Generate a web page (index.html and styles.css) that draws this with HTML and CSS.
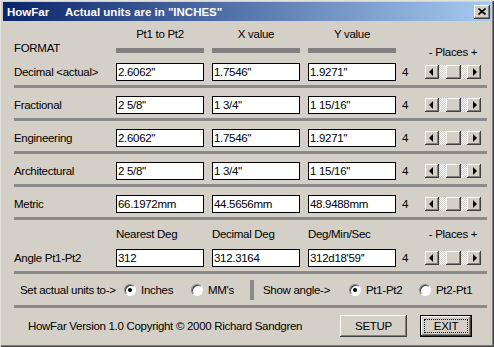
FILE: index.html
```html
<!DOCTYPE html>
<html>
<head>
    <meta charset="UTF-8">
    <title>HowFar</title>
    <link rel="stylesheet" href="styles.css">
</head>
<body>
<div class="window">
    <div class="titlebar">
        <span class="app">HowFar</span>
        <span class="caption">Actual units are in "INCHES"</span>
        <span class="close">
            <svg width="8" height="7" viewBox="0 0 8 7"><path d="M0.5 0.5 L7.5 6.5 M7.5 0.5 L0.5 6.5" stroke="#000" stroke-width="1.6" fill="none"/></svg>
        </span>
    </div>
    <div class="panel">
        <div class="grid head">
            <div class="col-title c2">Pt1 to Pt2</div>
            <div class="col-title c3">X value</div>
            <div class="col-title c4">Y value</div>
            <div class="format">FORMAT</div>
            <div class="bar c2"></div>
            <div class="bar c3"></div>
            <div class="bar c4"></div>
            <div class="places places-low">- Places +</div>
        </div>

        <div class="grid row">
            <div class="label">Decimal &lt;actual&gt;</div>
            <div class="field">2.6062''</div>
            <div class="field">1.7546''</div>
            <div class="field">1.9271''</div>
            <div class="num">4</div>
            <div class="scroll"><span class="sbtn"><i class="arrow-l"></i></span><span class="track"><span class="thumb"></span></span><span class="sbtn"><i class="arrow-r"></i></span></div>
        </div>
        <div class="grid row">
            <div class="label">Fractional</div>
            <div class="field">2 5/8''</div>
            <div class="field">1 3/4''</div>
            <div class="field">1 15/16''</div>
            <div class="num">4</div>
            <div class="scroll"><span class="sbtn"><i class="arrow-l"></i></span><span class="track"><span class="thumb"></span></span><span class="sbtn"><i class="arrow-r"></i></span></div>
        </div>
        <div class="grid row">
            <div class="label">Engineering</div>
            <div class="field">2.6062''</div>
            <div class="field">1.7546''</div>
            <div class="field">1.9271''</div>
            <div class="num">4</div>
            <div class="scroll"><span class="sbtn"><i class="arrow-l"></i></span><span class="track"><span class="thumb"></span></span><span class="sbtn"><i class="arrow-r"></i></span></div>
        </div>
        <div class="grid row">
            <div class="label">Architectural</div>
            <div class="field">2 5/8''</div>
            <div class="field">1 3/4''</div>
            <div class="field">1 15/16''</div>
            <div class="num">4</div>
            <div class="scroll"><span class="sbtn"><i class="arrow-l"></i></span><span class="track"><span class="thumb"></span></span><span class="sbtn"><i class="arrow-r"></i></span></div>
        </div>
        <div class="grid row">
            <div class="label">Metric</div>
            <div class="field">66.1972mm</div>
            <div class="field">44.5656mm</div>
            <div class="field">48.9488mm</div>
            <div class="num">4</div>
            <div class="scroll"><span class="sbtn"><i class="arrow-l"></i></span><span class="track"><span class="thumb"></span></span><span class="sbtn"><i class="arrow-r"></i></span></div>
        </div>

        <div class="grid angle-head">
            <div class="col-title left c2">Nearest Deg</div>
            <div class="col-title left c3">Decimal Deg</div>
            <div class="col-title left c4">Deg/Min/Sec</div>
            <div class="places">- Places +</div>
        </div>
        <div class="grid row">
            <div class="label">Angle Pt1-Pt2</div>
            <div class="field">312</div>
            <div class="field">312.3164</div>
            <div class="field">312d18'59''</div>
            <div class="num">4</div>
            <div class="scroll"><span class="sbtn"><i class="arrow-l"></i></span><span class="track"><span class="thumb"></span></span><span class="sbtn"><i class="arrow-r"></i></span></div>
        </div>

        <div class="options">
            <span class="units-label">Set actual units to-&gt;</span>
            <span class="opt opt-inches"><span class="radio checked"></span>Inches</span>
            <span class="opt opt-mm"><span class="radio"></span>MM's</span>
            <span class="vbar"></span>
            <span class="angle-label">Show angle-&gt;</span>
            <span class="opt opt-pt1"><span class="radio checked"></span>Pt1-Pt2</span>
            <span class="opt"><span class="radio"></span>Pt2-Pt1</span>
        </div>

        <div class="footer">
            <span class="copyright">HowFar Version 1.0 Copyright © 2000 Richard Sandgren</span>
            <span class="button setup">SETUP</span>
            <span class="button default"><span class="focus">EXIT</span></span>
        </div>
    </div>
</div>
</body>
</html>
```

FILE: styles.css
```css
body {
    margin: 0px;
    padding: 0px;
    font-family: "Liberation Sans", Arial, sans-serif;
    font-size: 11.5px;
    letter-spacing: -0.3px;
    color: #000;
    background: #d4d0c8;
}

.window {
    width: 494px;
    height: 347px;
    box-sizing: border-box;
    padding: 2px 3px 3px 3px;
    background: #d4d0c8;
    box-shadow: inset 1px 1px 0 #e4e2dc, inset -1px -1px 0 #404040, inset -2px -2px 0 #808080;
    overflow: hidden;
}

.titlebar {
    height: 19px;
    display: flex;
    align-items: center;
    padding-left: 4px;
    background: linear-gradient(to right, #0a246a, #a6caf0);
    color: #fff;
    font-weight: bold;
    letter-spacing: 0px;
    white-space: nowrap;
}

.app {
    width: 58px;
}

.close {
    margin-left: auto;
    margin-right: 1px;
    width: 16px;
    height: 14px;
    display: flex;
    align-items: center;
    justify-content: center;
    background: #d4d0c8;
    box-shadow: inset -1px -1px 0 #404040, inset 1px 1px 0 #fff, inset -2px -2px 0 #808080;
}

.close svg {
    display: block;
}

.panel {
    margin: 0px 4px 0px 11px;
}

.grid {
    display: grid;
    grid-template-columns: 102px 88px 96px 96px 29px 56px;
    align-items: center;
    white-space: nowrap;
}

.c2 { grid-column: 2; }
.c3 { grid-column: 3; }
.c4 { grid-column: 4; }

.head {
    padding-top: 6px;
    grid-template-rows: 14px 14px;
}

.col-title {
    grid-row: 1;
    justify-self: end;
    width: 88px;
    text-align: center;
    line-height: 14px;
}

.col-title.left {
    text-align: left;
}

.format {
    grid-row: 2;
    grid-column: 1;
    line-height: 14px;
}

.bar {
    grid-row: 2;
    justify-self: end;
    align-self: end;
    width: 88px;
    height: 5px;
    margin-bottom: 2px;
    background: #808080;
}

.places {
    grid-column: 6;
    text-align: center;
    line-height: 14px;
}

.places-low {
    grid-row: 2;
    align-self: end;
    margin-bottom: -4px;
}

.row {
    padding: 8px 0px 4px 0px;
    grid-template-rows: 18px;
    border-bottom: 3px solid #8a8a8a;
}

.label {
    grid-column: 1;
}

.field {
    justify-self: end;
    width: 88px;
    height: 18px;
    box-sizing: border-box;
    border: 1px solid #000;
    background: #fff;
    padding-left: 1px;
    line-height: 16px;
}

.num {
    padding-left: 6px;
}

.scroll {
    display: flex;
    width: 56px;
    height: 14px;
}

.sbtn, .thumb {
    background: #d4d0c8;
    box-shadow: inset -1px -1px 0 #404040, inset 1px 1px 0 #fff, inset -2px -2px 0 #808080;
}

.sbtn {
    width: 14px;
    height: 14px;
    display: flex;
    align-items: center;
    justify-content: center;
}

.arrow-l, .arrow-r {
    width: 0px;
    height: 0px;
    border-top: 4px solid transparent;
    border-bottom: 4px solid transparent;
}

.arrow-l {
    border-right: 4px solid #000;
    margin-left: -2px;
}

.arrow-r {
    border-left: 4px solid #000;
    margin-left: 1px;
}

.track {
    flex: 1;
    display: flex;
    justify-content: center;
    background-image: repeating-conic-gradient(#fff 0 25%, #d4d0c8 0 50%);
    background-size: 2px 2px;
}

.thumb {
    width: 15px;
    height: 14px;
}

.angle-head {
    padding-top: 7px;
    grid-template-rows: 14px;
}

.angle-head .places {
    grid-row: 1;
}

.options {
    display: flex;
    align-items: center;
    height: 31px;
    border-bottom: 3px solid #8a8a8a;
    white-space: nowrap;
}

.units-label {
    margin-left: 6px;
    width: 104px;
}

.opt {
    display: flex;
    align-items: center;
    gap: 5px;
}

.opt-inches { width: 67px; }
.opt-mm { width: 59px; }
.opt-pt1 { width: 70px; }

.radio {
    width: 12px;
    height: 12px;
    box-sizing: border-box;
    border-radius: 50%;
    background: #fff;
    border: 1px solid;
    border-color: #808080 #fff #fff #808080;
    box-shadow: inset 1px 1px 0 #404040;
    display: flex;
    align-items: center;
    justify-content: center;
}

.radio.checked::after {
    content: "";
    width: 4px;
    height: 4px;
    border-radius: 50%;
    background: #000;
}

.vbar {
    width: 4px;
    height: 20px;
    background: #8a8a8a;
}

.angle-label {
    margin-left: 9px;
    width: 86px;
}

.footer {
    display: flex;
    align-items: center;
    padding-top: 7px;
    white-space: nowrap;
}

.copyright {
    margin-left: 14px;
    margin-right: auto;
}

.button {
    height: 22px;
    box-sizing: border-box;
    display: flex;
    align-items: center;
    justify-content: center;
    background: #d4d0c8;
    box-shadow: inset -1px -1px 0 #404040, inset 1px 1px 0 #fff, inset -2px -2px 0 #808080;
}

.setup {
    width: 67px;
    margin-right: 13px;
}

.default {
    width: 52px;
    margin-right: 15px;
    border: 1px solid #000;
    padding: 3px;
}

.focus {
    flex: 1;
    align-self: stretch;
    display: flex;
    align-items: center;
    justify-content: center;
    border: 1px dotted #000;
}
```
